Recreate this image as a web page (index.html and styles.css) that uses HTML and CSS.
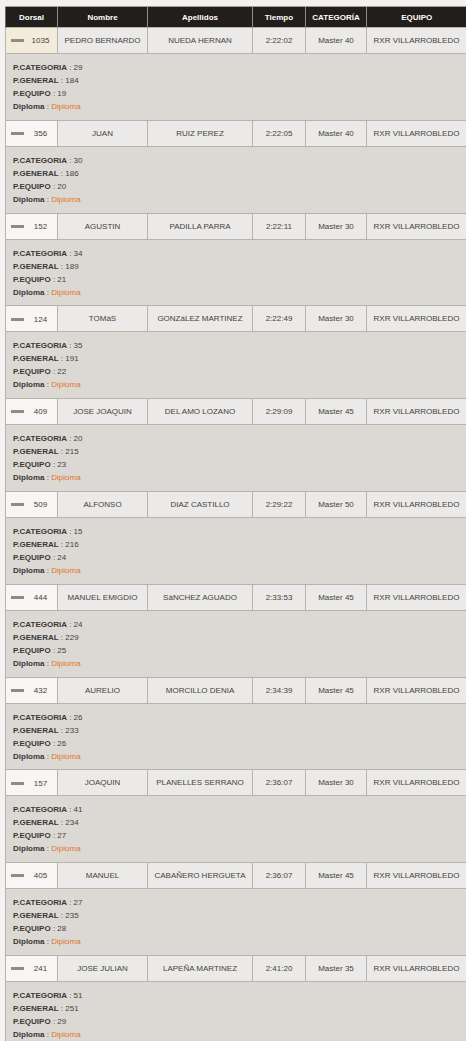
FILE: index.html
```html
<!DOCTYPE html>
<html>
<head>
<meta charset="utf-8">
<link rel="stylesheet" href="styles.css">
</head>
<body>
<table class="results">
<colgroup>
<col class="c-dorsal"><col class="c-nombre"><col class="c-apellidos"><col class="c-tiempo"><col class="c-cat"><col class="c-equipo">
</colgroup>
<thead>
<tr><th>Dorsal</th><th>Nombre</th><th>Apellidos</th><th>Tiempo</th><th>CATEGORÍA</th><th>EQUIPO</th></tr>
</thead>
<tbody>
<tr class="row active"><td class="dorsal"><span class="minus"></span><span class="num">1035</span></td><td>PEDRO BERNARDO</td><td>NUEDA HERNAN</td><td>2:22:02</td><td>Master 40</td><td>RXR VILLARROBLEDO</td></tr>
<tr class="detail"><td colspan="6"><p><b>P.CATEGORIA</b> : 29</p><p><b>P.GENERAL</b> : 184</p><p><b>P.EQUIPO</b> : 19</p><p><b>Diploma</b> : <a>Diploma</a></p></td></tr>
<tr class="row"><td class="dorsal"><span class="minus"></span><span class="num">356</span></td><td>JUAN</td><td>RUIZ PEREZ</td><td>2:22:05</td><td>Master 40</td><td>RXR VILLARROBLEDO</td></tr>
<tr class="detail"><td colspan="6"><p><b>P.CATEGORIA</b> : 30</p><p><b>P.GENERAL</b> : 186</p><p><b>P.EQUIPO</b> : 20</p><p><b>Diploma</b> : <a>Diploma</a></p></td></tr>
<tr class="row"><td class="dorsal"><span class="minus"></span><span class="num">152</span></td><td>AGUSTIN</td><td>PADILLA PARRA</td><td>2:22:11</td><td>Master 30</td><td>RXR VILLARROBLEDO</td></tr>
<tr class="detail"><td colspan="6"><p><b>P.CATEGORIA</b> : 34</p><p><b>P.GENERAL</b> : 189</p><p><b>P.EQUIPO</b> : 21</p><p><b>Diploma</b> : <a>Diploma</a></p></td></tr>
<tr class="row"><td class="dorsal"><span class="minus"></span><span class="num">124</span></td><td>TOMáS</td><td>GONZáLEZ MARTINEZ</td><td>2:22:49</td><td>Master 30</td><td>RXR VILLARROBLEDO</td></tr>
<tr class="detail"><td colspan="6"><p><b>P.CATEGORIA</b> : 35</p><p><b>P.GENERAL</b> : 191</p><p><b>P.EQUIPO</b> : 22</p><p><b>Diploma</b> : <a>Diploma</a></p></td></tr>
<tr class="row"><td class="dorsal"><span class="minus"></span><span class="num">409</span></td><td>JOSE JOAQUIN</td><td>DEL AMO LOZANO</td><td>2:29:09</td><td>Master 45</td><td>RXR VILLARROBLEDO</td></tr>
<tr class="detail"><td colspan="6"><p><b>P.CATEGORIA</b> : 20</p><p><b>P.GENERAL</b> : 215</p><p><b>P.EQUIPO</b> : 23</p><p><b>Diploma</b> : <a>Diploma</a></p></td></tr>
<tr class="row"><td class="dorsal"><span class="minus"></span><span class="num">509</span></td><td>ALFONSO</td><td>DIAZ CASTILLO</td><td>2:29:22</td><td>Master 50</td><td>RXR VILLARROBLEDO</td></tr>
<tr class="detail"><td colspan="6"><p><b>P.CATEGORIA</b> : 15</p><p><b>P.GENERAL</b> : 216</p><p><b>P.EQUIPO</b> : 24</p><p><b>Diploma</b> : <a>Diploma</a></p></td></tr>
<tr class="row"><td class="dorsal"><span class="minus"></span><span class="num">444</span></td><td>MANUEL EMIGDIO</td><td>SáNCHEZ AGUADO</td><td>2:33:53</td><td>Master 45</td><td>RXR VILLARROBLEDO</td></tr>
<tr class="detail"><td colspan="6"><p><b>P.CATEGORIA</b> : 24</p><p><b>P.GENERAL</b> : 229</p><p><b>P.EQUIPO</b> : 25</p><p><b>Diploma</b> : <a>Diploma</a></p></td></tr>
<tr class="row"><td class="dorsal"><span class="minus"></span><span class="num">432</span></td><td>AURELIO</td><td>MORCILLO DENIA</td><td>2:34:39</td><td>Master 45</td><td>RXR VILLARROBLEDO</td></tr>
<tr class="detail"><td colspan="6"><p><b>P.CATEGORIA</b> : 26</p><p><b>P.GENERAL</b> : 233</p><p><b>P.EQUIPO</b> : 26</p><p><b>Diploma</b> : <a>Diploma</a></p></td></tr>
<tr class="row"><td class="dorsal"><span class="minus"></span><span class="num">157</span></td><td>JOAQUIN</td><td>PLANELLES SERRANO</td><td>2:36:07</td><td>Master 30</td><td>RXR VILLARROBLEDO</td></tr>
<tr class="detail"><td colspan="6"><p><b>P.CATEGORIA</b> : 41</p><p><b>P.GENERAL</b> : 234</p><p><b>P.EQUIPO</b> : 27</p><p><b>Diploma</b> : <a>Diploma</a></p></td></tr>
<tr class="row"><td class="dorsal"><span class="minus"></span><span class="num">405</span></td><td>MANUEL</td><td>CABAÑERO HERGUETA</td><td>2:36:07</td><td>Master 45</td><td>RXR VILLARROBLEDO</td></tr>
<tr class="detail"><td colspan="6"><p><b>P.CATEGORIA</b> : 27</p><p><b>P.GENERAL</b> : 235</p><p><b>P.EQUIPO</b> : 28</p><p><b>Diploma</b> : <a>Diploma</a></p></td></tr>
<tr class="row"><td class="dorsal"><span class="minus"></span><span class="num">241</span></td><td>JOSE JULIAN</td><td>LAPEÑA MARTINEZ</td><td>2:41:20</td><td>Master 35</td><td>RXR VILLARROBLEDO</td></tr>
<tr class="detail"><td colspan="6"><p><b>P.CATEGORIA</b> : 51</p><p><b>P.GENERAL</b> : 251</p><p><b>P.EQUIPO</b> : 29</p><p><b>Diploma</b> : <a>Diploma</a></p></td></tr>
</tbody>
</table>
</body>
</html>
```
FILE: styles.css
```css
html, body {
  margin: 0;
  padding: 0;
  background: #f3f2f0;
}
body {
  padding: 6px 0 0 5px;
  font-family: "Liberation Sans", Arial, sans-serif;
  font-size: 8px;
  color: #444240;
}
.results {
  border-collapse: collapse;
  table-layout: fixed;
  width: 461px;
}
.c-dorsal { width: 52px; }
.c-nombre { width: 90px; }
.c-apellidos { width: 105px; }
.c-tiempo { width: 53px; }
.c-cat { width: 61px; }
.c-equipo { width: 100px; }
th {
  background: #221e1b;
  color: #fff;
  font-weight: bold;
  font-size: 8px;
  height: 20px;
  padding: 0;
  border-left: 1px solid #8e8a86;
  border-top: 1px solid #a09c98;
  text-align: center;
}
th:first-child { border-left: 1px solid #6e6a66; }
.row td {
  height: 25px;
  padding: 0;
  text-align: center;
  background: #ebeae8;
  border: 1px solid #b7b4b0;
  white-space: nowrap;
  overflow: hidden;
}
.row td.dorsal {
  background: #f7f6f4;
  text-align: left;
}
.row.active td.dorsal { background: #f3ecdb; }
.minus {
  display: inline-block;
  width: 13px;
  height: 3px;
  background: #8d8c8a;
  vertical-align: middle;
  margin: 0 0 0 5px;
}
.num {
  display: inline-block;
  width: 33px;
  text-align: center;
  vertical-align: middle;
}
.detail td {
  background: #dcd9d5;
  border: 1px solid #b7b4b0;
  border-top: none;
  height: 65.8px;
  padding: 0 0 0 7px;
  vertical-align: top;
}
.detail p {
  margin: 0;
  line-height: 13px;
}
.detail p:first-child { margin-top: 7px; }
.detail b { color: #3a3836; }
.detail a { color: #e0752a; }
```
